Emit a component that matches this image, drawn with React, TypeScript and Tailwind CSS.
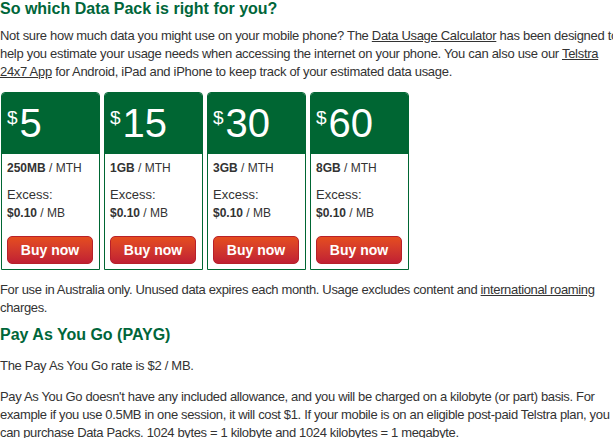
import React from "react";

const plans = [
  { price: "5", data: "250MB" },
  { price: "15", data: "1GB" },
  { price: "30", data: "3GB" },
  { price: "60", data: "8GB" },
];

export default function App() {
  return (
    <div className="bg-white w-[613px] h-[438px] overflow-hidden">
      <div className="w-[622px] text-[13px] leading-[18px] text-[#333]" style={{ fontFamily: '"Liberation Sans", Arial, sans-serif' }}>
        <h2 className="text-[16px] leading-[18px] font-bold text-[#00663a]">So which Data Pack is right for you?</h2>
        <p className="mt-[9px] tracking-[-0.3px]">
          Not sure how much data you might use on your mobile phone? The <a className="underline underline-offset-[1px]">Data Usage Calculator</a> has been designed to help you estimate your usage needs when accessing the internet on your phone. You can also use our <a className="underline underline-offset-[1px]">Telstra 24x7 App</a> for Android, iPad and iPhone to keep track of your estimated data usage.
        </p>
        <div className="flex gap-[4px] mt-[11px] ml-[1px]">
          {plans.map((p) => (
            <div key={p.price} className="w-[99px] h-[178px] border border-[#006633] rounded-t-[4px] flex flex-col">
              <div className="h-[61px] bg-[#006633] rounded-t-[3px] text-white flex items-start pl-[5px] pt-[10px]">
                <span className="text-[19px] leading-[19px] mt-[5px]">$</span>
                <span className="text-[40px] leading-[40px] ml-[2px]">{p.price}</span>
              </div>
              <div className="px-[5px] text-[12px]">
                <div className="mt-[5px]"><b>{p.data}</b> / MTH</div>
                <div className="mt-[9px] text-[13px]">Excess:</div>
                <div><b>$0.10</b> / MB</div>
                <button className="mt-[14px] w-[86px] h-[28px] rounded-[5px] border border-[#b8202a] bg-gradient-to-b from-[#e54d1e] to-[#c01f33] text-white font-bold text-[14px]">Buy now</button>
              </div>
            </div>
          ))}
        </div>
        <p className="mt-[11px] tracking-[-0.35px]">For use in Australia only. Unused data expires each month. Usage excludes content and <a className="underline underline-offset-[1px]">international roaming</a> charges.</p>
        <h3 className="text-[16px] leading-[20px] font-bold text-[#00663a] mt-[8px]">Pay As You Go (PAYG)</h3>
        <p className="mt-[12px] tracking-[-0.3px]">The Pay As You Go rate is $2 / MB.</p>
        <p className="mt-[13px] tracking-[-0.35px]">Pay As You Go doesn't have any included allowance, and you will be charged on a kilobyte (or part) basis. For example if you use 0.5MB in one session, it will cost $1. If your mobile is on an eligible post-paid Telstra plan, you can purchase <a className="underline underline-offset-[1px]">Data Packs</a>. 1024 bytes = 1 kilobyte and 1024 kilobytes = 1 megabyte.</p>
      </div>
    </div>
  );
}
